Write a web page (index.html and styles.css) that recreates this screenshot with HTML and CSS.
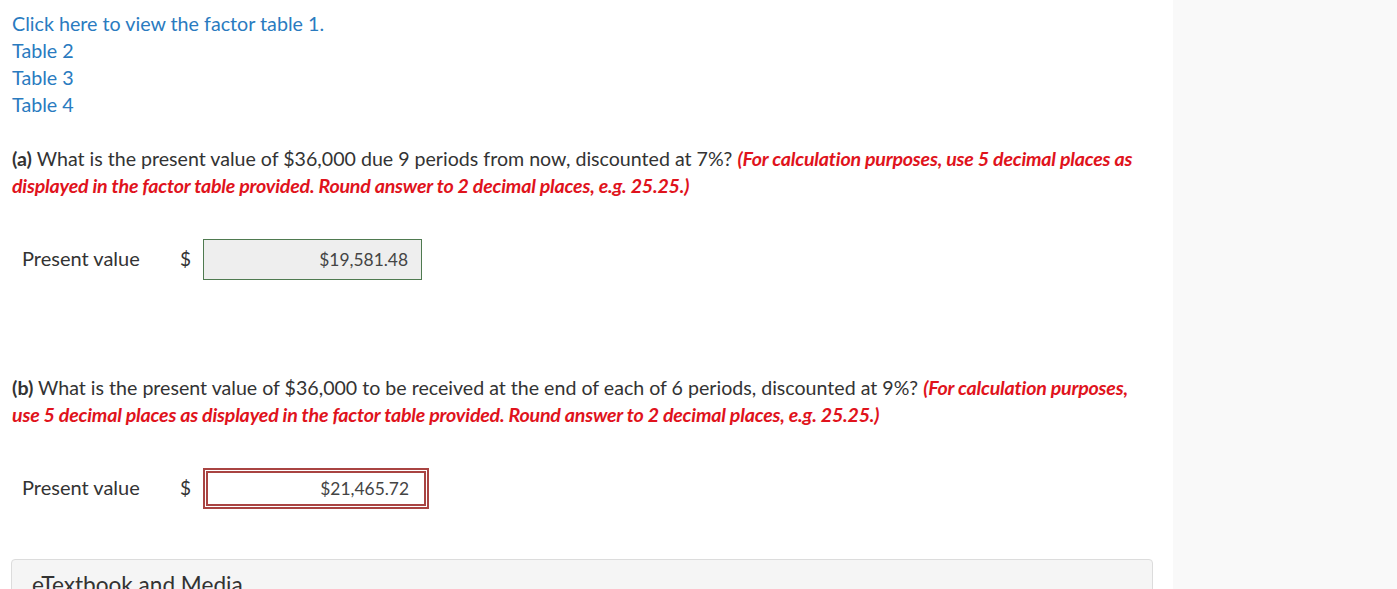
FILE: index.html
```html
<!DOCTYPE html>
<html lang="en">

<head>
    <meta charset="UTF-8">
    <meta name="viewport" content="width=device-width, initial-scale=1.0">
    <title>Present value</title>
    <link rel="stylesheet" href="styles.css">
</head>

<body>
    <div id="page">
        <div id="main">
            <!-- factor tables -->
            <div class="links">
                <a href="#">Click here to view the factor table 1.</a>
                <a href="#">Table 2</a>
                <a href="#">Table 3</a>
                <a href="#">Table 4</a>
            </div>

            <p class="question">
                <b>(a)</b> What is the present value of $36,000 due 9 periods from now, discounted at 7%?
                <em>(For calculation purposes, use 5 decimal places as displayed in the factor table provided. Round answer to 2 decimal places, e.g. 25.25.)</em>
            </p>

            <div class="answer">
                <span class="label">Present value</span>
                <span class="dollar">$</span>
                <input type="text" class="value correct" value="$19,581.48" readonly>
            </div>

            <p class="question second">
                <b>(b)</b> What is the present value of $36,000 to be received at the end of each of 6 periods, discounted at 9%?
                <em>(For calculation purposes, use 5 decimal places as displayed in the factor table provided. Round answer to 2 decimal places, e.g. 25.25.)</em>
            </p>

            <div class="answer">
                <span class="label">Present value</span>
                <span class="dollar">$</span>
                <input type="text" class="value wrong" value="$21,465.72" readonly>
            </div>

            <div class="media">eTextbook and Media</div>
        </div>

        <!-- side column -->
        <div id="side"></div>
    </div>
</body>

</html>
```

FILE: styles.css
```css
* {
    margin: 0;
    padding: 0;
    box-sizing: border-box;
}

body {
    font-family: Lato, "Open Sans", sans-serif;
    color: #333;
    background-color: white;
    height: 589px;
    overflow: hidden;
}

#page {
    display: flex;
    height: 100%;
}

#main {
    width: 1173px;
    padding: 10px 20px 0 12px;
}

#side {
    flex: 1;
    background-color: #f9f9f9;
}

.links {
    display: flex;
    flex-direction: column;
    align-items: flex-start;
}

.links a {
    font-size: 19.7px;
    line-height: 27px;
    color: #2a7bbf;
    text-decoration: none;
}

.question {
    margin-top: 27px;
    font-size: 19.6px;
    line-height: 27px;
    color: #333;
}

.question b {
    font-weight: bold;
}

.question em {
    font-weight: bold;
    color: #e0131c;
    letter-spacing: -0.2px;
}

.question.second {
    margin-top: 94px;
}

.answer {
    display: flex;
    align-items: center;
    margin-top: 40px;
    padding-left: 10px;
}

.label {
    width: 158px;
    font-size: 20px;
    margin-bottom: 3px;
}

.dollar {
    width: 23px;
    font-size: 19px;
    margin-bottom: 3px;
}

.value {
    height: 41px;
    width: 219px;
    font-family: Lato, sans-serif;
    font-size: 17.4px;
    color: #444;
    text-align: right;
    padding-right: 13px;
    outline: none;
}

.correct {
    background-color: #eeeeee;
    border: 1px solid #4f7a50;
}

.wrong {
    width: 226px;
    background-color: white;
    border: 5px double #a94442;
    padding-right: 15px;
}

.media {
    margin-top: 50px;
    margin-left: -1px;
    width: 1142px;
    height: 60px;
    padding: 11px 20px;
    background-color: #f5f5f5;
    border: 1px solid #dcdcdc;
    border-radius: 4px;
    font-size: 22.6px;
    color: #333;
}
```
